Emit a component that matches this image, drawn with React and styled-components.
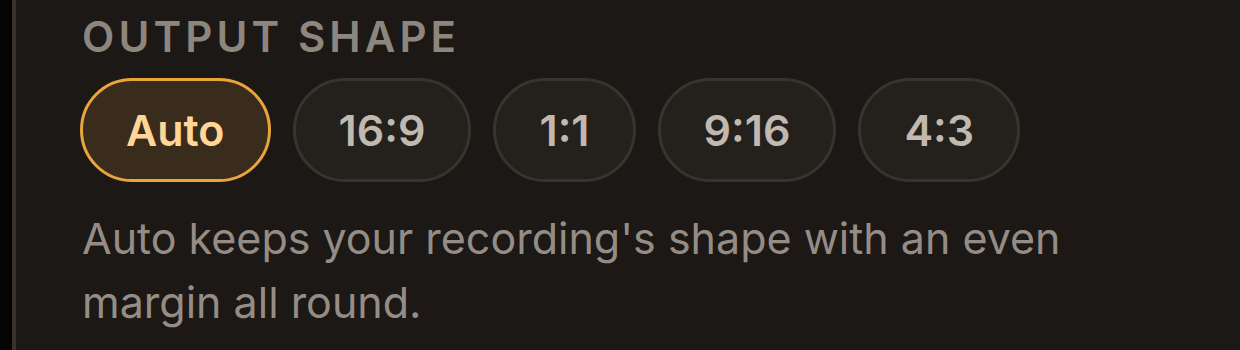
import React, { useState } from "react";
import styled, { createGlobalStyle } from "styled-components";

const Global = createGlobalStyle`
  html, body { margin: 0; padding: 0; background: #060505; }
  body { font-family: Inter, "Noto Sans", sans-serif; -webkit-font-smoothing: antialiased; }
  #root { height: 350px; }
`;

const Page = styled.div`
  height: 350px;
  padding-left: 12px;
  display: flex;
  background: #060505;
`;

const Panel = styled.section`
  flex: 1;
  border-left: 4px solid #39322b;
  background: #1b1815;
  padding: 11px 0 0 64px;
  display: flex;
  flex-direction: column;
`;

const Title = styled.h2`
  margin: 0 0 0 2px;
  font-size: 42px;
  line-height: 51px;
  font-weight: 600;
  letter-spacing: 4.1px;
  color: #8d867e;
  text-transform: uppercase;
`;

const Options = styled.div`
  display: flex;
  gap: 22px;
  margin-top: 16px;
`;

const Pill = styled.button`
  height: 104px;
  box-sizing: border-box;
  padding: 0 43px;
  border-radius: 52px;
  border: 3px solid ${(p) => (p.$active ? "#e9a53c" : "#3a332d")};
  background: ${(p) => (p.$active ? "#3a2c1d" : "#24201c")};
  color: ${(p) => (p.$active ? "#ffd697" : "#c1b9b1")};
  font-family: Inter, "Noto Sans", sans-serif;
  font-size: 43px;
  font-weight: 600;
  cursor: pointer;
  display: flex;
  align-items: center;
  justify-content: center;
`;

const Hint = styled.p`
  margin: 24px 0 0 2px;
  max-width: 1010px;
  font-size: 43px;
  line-height: 64px;
  font-weight: 400;
  color: #958d85;
`;

const shapes = ["Auto", "16:9", "1:1", "9:16", "4:3"];

export default function App() {
  const [active, setActive] = useState("Auto");
  return (
    <>
      <Global />
      <Page>
        <Panel>
          <Title>Output shape</Title>
          <Options>
            {shapes.map((s) => (
              <Pill key={s} $active={s === active} onClick={() => setActive(s)}>
                {s}
              </Pill>
            ))}
          </Options>
          <Hint>Auto keeps your recording's shape with an even margin all round.</Hint>
        </Panel>
      </Page>
    </>
  );
}
